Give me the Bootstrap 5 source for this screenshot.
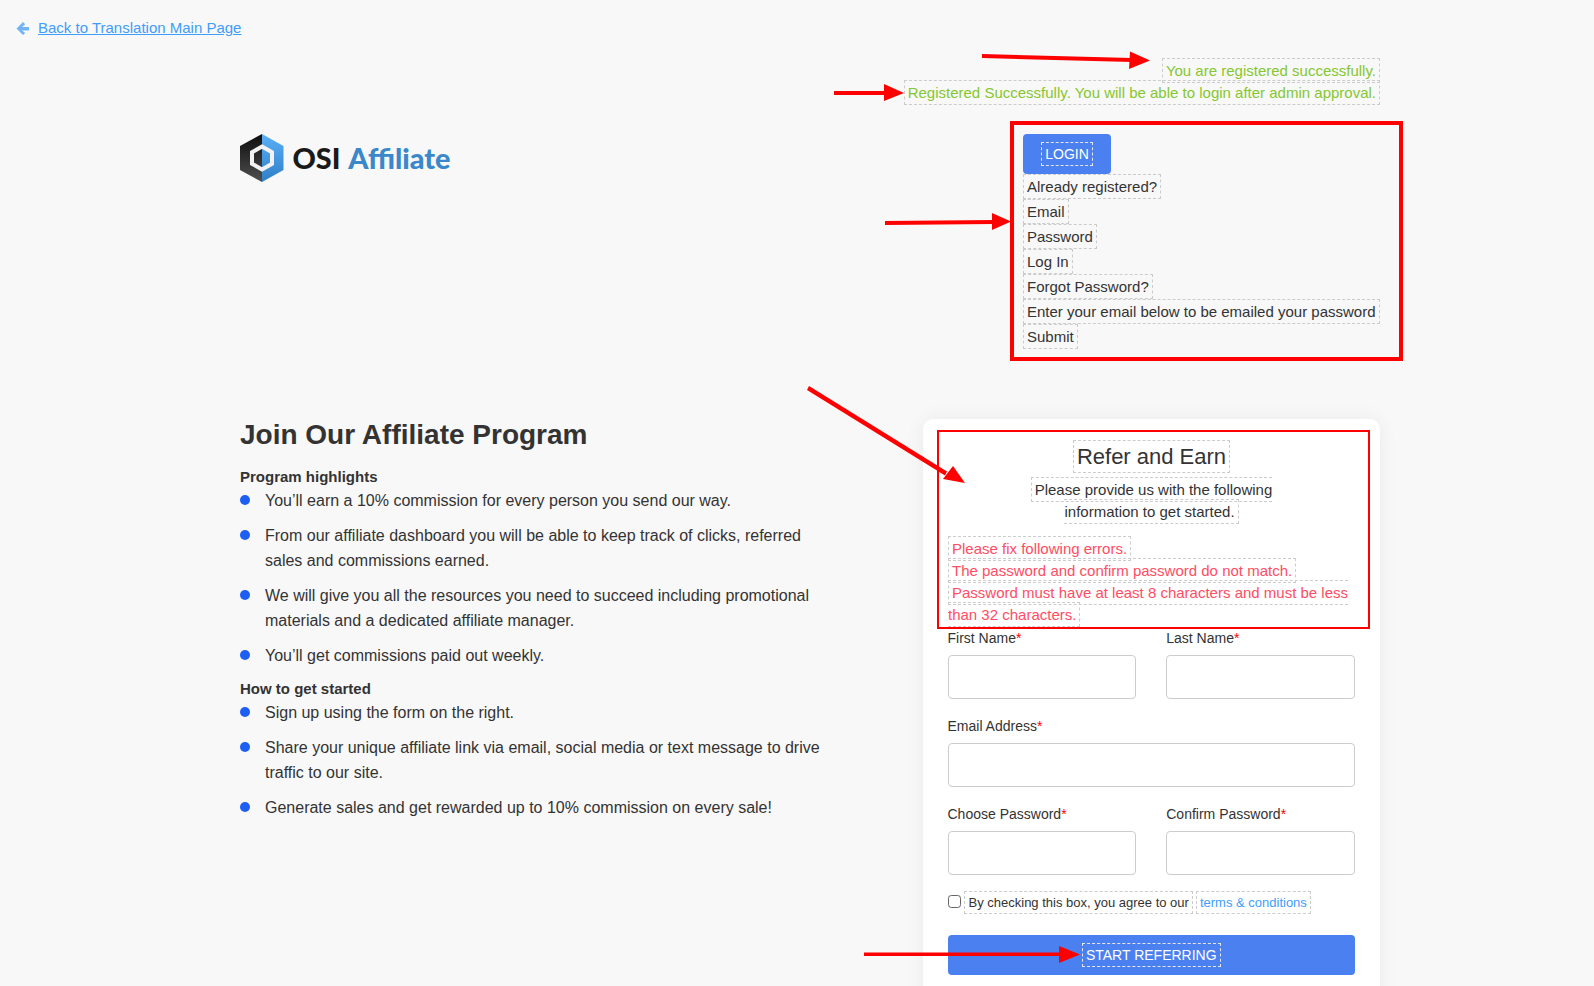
<!DOCTYPE html>
<html lang="en">
<head>
  <meta charset="UTF-8" />
  <meta name="viewport" content="width=device-width, initial-scale=1.0"/>
  <title>OSI Affiliate | Join Our Affiliate Program</title>
  <link href="https://cdn.jsdelivr.net/npm/bootstrap@5.3.0/dist/css/bootstrap.min.css" rel="stylesheet"/>
  <style>
    html, body {
      height: 100%;
      overflow: hidden;
    }
    body {
      background-color: #f8f8f8;
      color: #333;
      font-family: "Liberation Sans", Arial, sans-serif;
      font-size: 15px;
      position: relative;
    }
    a {
      color: #3f9dfb;
    }
    /* dashed outline the translation tool puts round each string */
    .tr-box {
      border: 1px dashed #ccc;
      padding: 3px;
    }
    .top-back {
      padding: 18px 0 0 15.5px;
      line-height: 20px;
      font-size: 15px;
    }
    .back-arrow {
      margin-right: 9.5px;
      vertical-align: -2px;
    }
    .page-wrap {
      width: 1140px;
      margin-left: 240px;
    }
    .msg-ok {
      color: #86c72f;
      line-height: 22px;
    }
    .msg-list {
      margin-top: 22px;
    }
    .top-row {
      margin-top: 17px;
    }
    .logo-box {
      padding-top: 13px;
      gap: 8.5px;
      height: 100%;
    }
    .logo-text {
      font-family: Lato, sans-serif;
      font-weight: 900;
      font-size: 28.8px;
      word-spacing: 2px;
      line-height: 48px;
      color: #1a1a1a;
      white-space: nowrap;
    }
    .logo-text span {
      color: #3a87cb;
    }
    .login-frame {
      border: 4px solid #f00;
      width: 393px;
      height: 240px;
      margin-right: -23px;
      padding: 9px 0 0 9px;
      line-height: 25px;
    }
    .btn-login {
      background-color: #4a80f0;
      color: #fff;
      border: 0;
      width: 88px;
      height: 40px;
      border-radius: 4px;
      font-size: 14px;
      padding: 0;
      display: block;
    }
    .btn-login:hover, .btn-submit:hover {
      background-color: #4a80f0;
      color: #fff;
    }
    .btn-login .tr-box, .btn-submit .tr-box {
      border-color: #e6e6e6;
    }
    .main-row {
      margin-top: 58px;
    }
    .left-col {
      width: 590px;
    }
    .left-col h1 {
      font-size: 28px;
      font-weight: 700;
      line-height: 32px;
      margin: 0 0 15px;
    }
    .left-col h6 {
      font-size: 15px;
      font-weight: 700;
      line-height: 22px;
      margin: 0;
    }
    .dot-list {
      list-style: none;
      padding: 0;
      margin: 0;
      font-size: 16px;
      line-height: 25px;
    }
    .dot-list li {
      position: relative;
      padding-left: 25px;
      margin-bottom: 10px;
    }
    .dot-list li::before {
      content: "";
      position: absolute;
      left: 0;
      top: 7px;
      width: 10px;
      height: 10px;
      border-radius: 50%;
      background-color: #1e5ef3;
    }
    .form-panel {
      width: 457px;
      padding: 11px 25px 40px 24.5px;
      background-color: #fff;
      border-radius: 10px;
      box-shadow: 0 0 20px rgba(0,0,0,0.06);
    }
    .note-frame {
      border: 2px solid #f00;
      margin: 0 -15px -1px -10.5px;
      padding: 9px 9px 0 9px;
      height: 199px;
      line-height: 22px;
    }
    .note-title {
      font-size: 22px;
      font-weight: 400;
      line-height: 32px;
      margin: 0 0 6px;
      padding-right: 4px;
    }
    .note-sub {
      width: 300px;
      margin: 0 auto 15px;
      padding-right: 4px;
    }
    .err-text {
      color: #ff4d63;
    }
    .field-label {
      font-size: 14px;
      line-height: 20px;
      margin-bottom: 7px;
      display: block;
    }
    .field-label i {
      color: #f00;
      font-style: normal;
    }
    .field-input {
      height: 44px;
      border: 1px solid #ccc;
      border-radius: 4px;
      background-color: #fff;
    }
    .form-row-gap {
      --bs-gutter-x: 30px;
      margin-bottom: 17px;
    }
    .agree-row {
      font-size: 13px;
      line-height: 15px;
      gap: 3px;
      margin-top: -1px;
      margin-bottom: 21px;
    }
    .agree-check {
      width: 13px;
      height: 13px;
      margin: -3px 0 0 0;
      border: 1px solid #666;
      border-radius: 2px;
      flex-shrink: 0;
    }
    .agree-text {
      padding-left: 4px;
    }
    .btn-submit {
      background-color: #4a80f0;
      color: #fff;
      border: 0;
      height: 40px;
      width: 100%;
      border-radius: 4px;
      font-size: 14px;
      padding: 0;
    }
    .arrows {
      position: absolute;
      left: 0;
      top: 0;
      pointer-events: none;
    }
  </style>
</head>
<body>
  <div class="top-back">
    <svg class="back-arrow" width="13" height="13" viewBox="0 0 13 13"><path d="M7 0 L9.2 2.2 L6 5 H13 V8.5 H6 L9.2 11 L7 13 L0.5 6.5 Z" fill="#72b4f8"/></svg><a href="#">Back to Translation Main Page</a>
  </div>

  <div class="page-wrap">
    <div class="msg-list text-end">
      <div class="msg-ok"><span class="tr-box">You are registered successfully.</span></div>
      <div class="msg-ok"><span class="tr-box">Registered Successfully. You will be able to login after admin approval.</span></div>
    </div>

    <div class="d-flex justify-content-between top-row">
      <div>
        <div class="d-flex logo-box">
          <svg width="44" height="48" viewBox="0 0 44 48">
            <defs>
              <linearGradient id="darkGrad" x1="0" y1="0" x2="0" y2="1">
                <stop offset="0" stop-color="#0d0d0d"/>
                <stop offset="1" stop-color="#4f4f4f"/>
              </linearGradient>
              <linearGradient id="blueGrad" x1="0" y1="0" x2="0" y2="1">
                <stop offset="0" stop-color="#5ab0f8"/>
                <stop offset="1" stop-color="#2f7fc6"/>
              </linearGradient>
            </defs>
            <polygon points="22,0 0,12 0,36 22,48" fill="url(#darkGrad)"/>
            <polygon points="22,0 43.5,12 43.5,36 22,48" fill="url(#blueGrad)"/>
            <polygon points="22,12.5 32,18.25 32,29.75 22,35.5 12,29.75 12,18.25" fill="none" stroke="#f2f2f2" stroke-width="4"/>
          </svg>
          <div class="logo-text">OSI <span>Affiliate</span></div>
        </div>
      </div>
      <div class="login-frame">
        <button class="btn btn-login" type="button"><span class="tr-box">LOGIN</span></button>
        <div><span class="tr-box">Already registered?</span></div>
        <div><span class="tr-box">Email</span></div>
        <div><span class="tr-box">Password</span></div>
        <div><span class="tr-box">Log In</span></div>
        <div><span class="tr-box">Forgot Password?</span></div>
        <div><span class="tr-box">Enter your email below to be emailed your password</span></div>
        <div><span class="tr-box">Submit</span></div>
      </div>
    </div>

    <div class="d-flex justify-content-between main-row">
      <div class="left-col">
        <h1>Join Our Affiliate Program</h1>
        <h6>Program highlights</h6>
        <ul class="dot-list">
          <li>You’ll earn a 10% commission for every person you send our way.</li>
          <li>From our affiliate dashboard you will be able to keep track of clicks, referred sales and commissions earned.</li>
          <li>We will give you all the resources you need to succeed including promotional materials and a dedicated affiliate manager.</li>
          <li>You’ll get commissions paid out weekly.</li>
        </ul>
        <h6>How to get started</h6>
        <ul class="dot-list">
          <li>Sign up using the form on the right.</li>
          <li>Share your unique affiliate link via email, social media or text message to drive traffic to our site.</li>
          <li>Generate sales and get rewarded up to 10% commission on every sale!</li>
        </ul>
      </div>

      <div class="form-panel">
        <div class="note-frame">
          <h4 class="note-title text-center"><span class="tr-box">Refer and Earn</span></h4>
          <div class="note-sub text-center"><span class="tr-box">Please provide us with the following information to get started.</span></div>
          <div class="err-text"><span class="tr-box">Please fix following errors.</span></div>
          <div class="err-text"><span class="tr-box">The password and confirm password do not match.</span></div>
          <div class="err-text"><span class="tr-box">Password must have at least 8 characters and must be less than 32 characters.</span></div>
        </div>
        <div class="row form-row-gap">
          <div class="col-6">
            <label class="field-label">First Name<i>*</i></label>
            <input class="form-control field-input" type="text"/>
          </div>
          <div class="col-6">
            <label class="field-label">Last Name<i>*</i></label>
            <input class="form-control field-input" type="text"/>
          </div>
        </div>
        <div class="form-row-gap">
          <label class="field-label">Email Address<i>*</i></label>
          <input class="form-control field-input" type="email"/>
        </div>
        <div class="row form-row-gap">
          <div class="col-6">
            <label class="field-label">Choose Password<i>*</i></label>
            <input class="form-control field-input" type="password"/>
          </div>
          <div class="col-6">
            <label class="field-label">Confirm Password<i>*</i></label>
            <input class="form-control field-input" type="password"/>
          </div>
        </div>
        <div class="d-flex align-items-center agree-row">
          <input class="form-check-input agree-check" type="checkbox"/>
          <span class="tr-box agree-text">By checking this box, you agree to our</span>
          <a class="tr-box text-decoration-none" href="#">terms &amp; conditions</a>
        </div>
        <button class="btn btn-submit" type="button"><span class="tr-box">START REFERRING</span></button>
      </div>
    </div>
  </div>

  <!-- red review arrows drawn over the page -->
  <svg class="arrows" width="1594" height="986" viewBox="0 0 1594 986">
    <g fill="#f00" stroke="none">
      <polygon points="982,54 1132,58 1132,62 982,58"/>
      <polygon points="1130,51.5 1150,60.5 1129,69"/>
      <rect x="834" y="91" width="52" height="4"/>
      <polygon points="884,84 904,93 884,101"/>
      <polygon points="885,221 994,220 994,224 885,225"/>
      <polygon points="992,213 1011,221.5 992,230"/>
      <polygon points="809,386 947,471.5 945,475.5 807,390"/>
      <polygon points="953,466 965,483 943,479"/>
      <rect x="864" y="952.5" width="197" height="3.5"/>
      <polygon points="1059,946 1080,954.5 1059,963"/>
    </g>
  </svg>

  <script src="https://cdn.jsdelivr.net/npm/bootstrap@5.3.0/dist/js/bootstrap.bundle.min.js"></script>
</body>
</html>
